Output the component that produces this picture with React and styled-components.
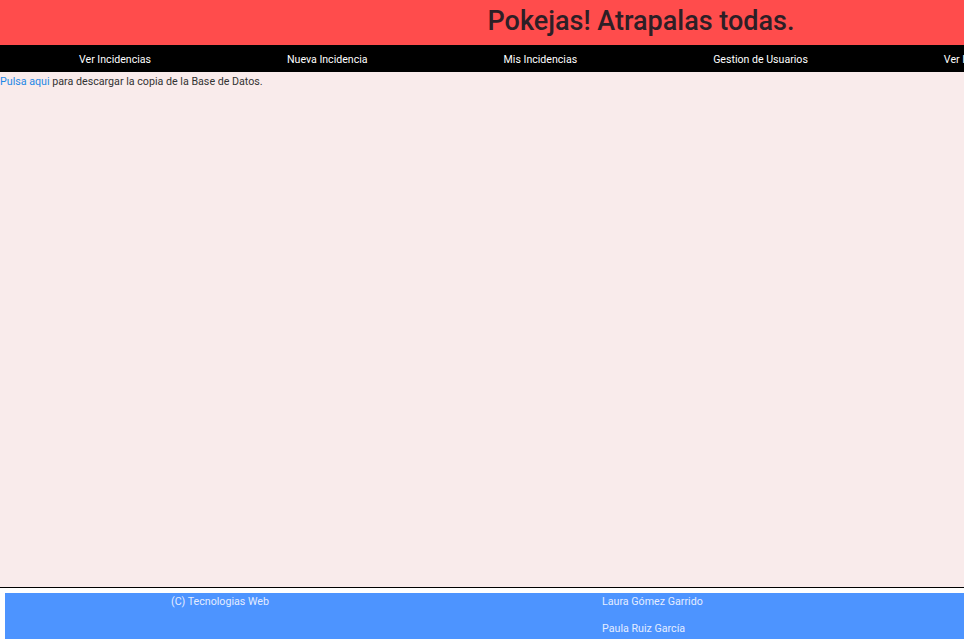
import React from 'react';
import styled, { createGlobalStyle } from 'styled-components';

const GlobalStyle = createGlobalStyle`
  html, body {
    margin: 0;
    padding: 0;
    height: 100%;
  }
  body {
    font-family: Roboto, "Liberation Sans", sans-serif;
    overflow: hidden;
  }
  #root {
    height: 100%;
  }
`;

const Page = styled.div`
  height: 100vh;
  display: flex;
  flex-direction: column;
  background: #fff;
`;

const Header = styled.header`
  height: 45px;
  flex-shrink: 0;
  background: #ff4c4c;
  display: flex;
  align-items: center;
  justify-content: center;
  padding: 0 0 4px 318px;
  box-sizing: border-box;
`;

const Title = styled.h1`
  margin: 0;
  font-size: 27px;
  font-weight: 500;
  color: #2d1f26;
  white-space: nowrap;
`;

const Nav = styled.nav`
  height: 27px;
  flex-shrink: 0;
  background: #000;
  display: flex;
  align-items: center;
  padding: 2px 0 0 11px;
  box-sizing: border-box;
  overflow: hidden;
  white-space: nowrap;
`;

const NavItem = styled.a`
  padding: 0 68px;
  color: #fff;
  font-size: 10.6px;
  text-decoration: none;
  cursor: pointer;
`;

const Main = styled.main`
  flex: 1;
  background: #f9ebeb;
  padding-top: 2px;
  font-size: 10.7px;
  line-height: 16px;
  color: #333;
`;

const Link = styled.a`
  color: #1e88e5;
  text-decoration: none;
`;

const Rule = styled.div`
  height: 1px;
  flex-shrink: 0;
  background: #000;
  margin-bottom: 5px;
`;

const Footer = styled.footer`
  height: 46px;
  flex-shrink: 0;
  margin-left: 5px;
  padding-top: 1px;
  box-sizing: border-box;
  background: #4d94ff;
  display: grid;
  grid-template-columns: 166px 431px 1fr;
  font-size: 10.7px;
  line-height: 16px;
  color: #e4ecff;
  overflow: hidden;
`;

const FooterCol = styled.div`
  grid-column: ${(p) => p.col};
  display: flex;
  flex-direction: column;
  gap: 11px;
`;

const navItems = [
  'Ver Incidencias',
  'Nueva Incidencia',
  'Mis Incidencias',
  'Gestion de Usuarios',
  'Ver Incidencias',
];

const App = () => (
  <>
    <GlobalStyle />
    <Page>
      <Header>
        <Title>Pokejas! Atrapalas todas.</Title>
      </Header>
      <Nav>
        {navItems.map((item, i) => (
          <NavItem key={i} href="#">{item}</NavItem>
        ))}
      </Nav>
      <Main>
        <Link href="#">Pulsa aqui</Link> para descargar la copia de la Base de Datos.
      </Main>
      <Rule />
      <Footer>
        <FooterCol col={2}>
          <span>(C) Tecnologias Web</span>
        </FooterCol>
        <FooterCol col={3}>
          <span>Laura Gómez Garrido</span>
          <span>Paula Ruiz García</span>
        </FooterCol>
      </Footer>
    </Page>
  </>
);

export default App;
